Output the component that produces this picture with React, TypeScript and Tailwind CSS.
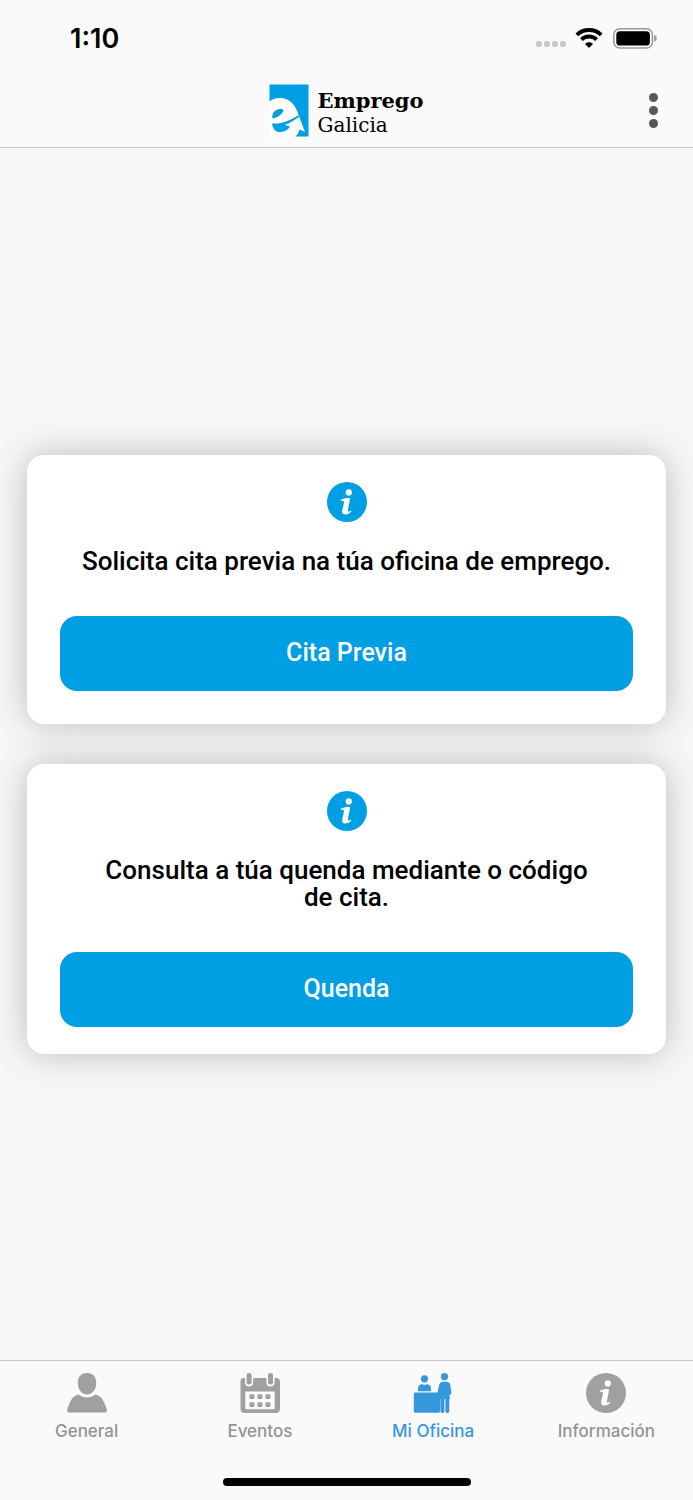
import React from 'react';

type IconProps = {
  className?: string;
};

const InfoIcon = ({ className }: IconProps) => (
  <svg viewBox="0 0 40 40" className={className} aria-hidden="true">
    <circle cx="20" cy="20" r="20" fill="currentColor" />
    <circle cx="21.8" cy="10.4" r="3.1" fill="#fff" />
    <path
      d="M13.800 17.700c2.600-1.300 5.600-2 9.200-1.700-.1 4.100-1.700 8.400-2 12-.1 1.400.4 1.900 1.400 1.500.6-.2 1-.5 1.500-.9l.4 1c-1.700 2-3.900 3-6.200 2.900-2.400-.1-3.200-1.600-2.900-3.800.4-2.900 1.700-6.100 1.700-8.900 0-1.300-1.200-1.300-3-1z"
      fill="#fff"
    />
  </svg>
);

const PersonIcon = ({ className }: IconProps) => (
  <svg viewBox="0 0 40 40" className={className} fill="currentColor" aria-hidden="true">
    <path d="M20 0c6 0 9.200 3.800 9.200 9.800C29.200 16.500 25.500 21.500 20 21.500S10.800 16.500 10.800 9.800C10.800 3.800 14 0 20 0z" />
    <path d="M11.800 21.500C14 23.500 16.800 24.500 20 24.500s6-1 8.200-3c3.300.9 5.500 2 7 4.400 2 3.200 3.700 7 4.600 10.600.5 1.800-.5 3-2.300 3h-35c-1.800 0-2.800-1.200-2.300-3 .9-3.600 2.600-7.400 4.600-10.600 1.500-2.400 3.700-3.500 7-4.400z" />
  </svg>
);

const CalendarIcon = ({ className }: IconProps) => (
  <svg viewBox="0 0 40 40" className={className} fill="currentColor" aria-hidden="true">
    <rect x="6.600" y="0" width="5" height="11.500" rx="2.200" />
    <rect x="28" y="0" width="5" height="11.500" rx="2.200" />
    <path
      fillRule="evenodd"
      d="M3.500 5H5v4.500c0 2.400 1.500 4 4.100 4s4.100-1.600 4.100-4V5h13.200v4.500c0 2.400 1.500 4 4.100 4s4.100-1.600 4.100-4V5h1.900c2 0 3.500 1.500 3.500 3.500V36c0 2.400-1.600 4-4 4H4.500c-2.400 0-4-1.600-4-4V8.500C.5 6.500 1.500 5 3.500 5zM5.300 18.600v16.600c0 .6.400 1 1 1h27.400c.6 0 1-.4 1-1V18.600z"
    />
    <rect x="9.400" y="21.300" width="5" height="4.800" rx=".9" />
    <rect x="17.400" y="21.300" width="5" height="4.800" rx=".9" />
    <rect x="25.400" y="21.300" width="5" height="4.800" rx=".9" />
    <rect x="9.400" y="29.300" width="5" height="4.800" rx=".9" />
    <rect x="17.400" y="29.300" width="5" height="4.800" rx=".9" />
    <rect x="25.400" y="29.300" width="5" height="4.800" rx=".9" />
  </svg>
);

const OfficeIcon = ({ className }: IconProps) => (
  <svg viewBox="0 0 40 40" className={className} fill="currentColor" aria-hidden="true">
    <circle cx="11.500" cy="5.800" r="3.600" />
    <path d="M5 18.300v-2.600c0-3 1.500-4.500 4.300-4.500l2.200.8 2.200-.8c2.800 0 4.300 1.500 4.300 4.500v2.600z" />
    <circle cx="31.500" cy="3.600" r="3.600" />
    <path d="M2.500 19.500h22l1.500-7c.5-2.400 1.700-3.800 4-3.800h3.500c2.200 0 3.500 1.300 3.900 3.500l1 7c.2 1.400-.5 2.300-1.800 2.500v4.300h-9.500V38c0 1.200-.6 1.700-1.700 1.700H2.500C1.400 39.700.8 39.100.8 38V21.200c0-1.100.6-1.700 1.700-1.700z" />
    <path d="M27.400 25h4v13c0 1.200-.7 2-2 2s-2-.8-2-2zM32.400 25h3.900v13c0 1.200-.7 2-2 2s-1.900-.8-1.900-2z" />
  </svg>
);

const WifiIcon = ({ className }: IconProps) => (
  <svg viewBox="0 0 28 20" className={className} fill="none" stroke="currentColor" strokeWidth="3.800" aria-hidden="true">
    <path d="M1.800 6.800C8.500.4 19.500.4 26.200 6.800" />
    <path d="M6.400 11.500c4.200-4 11-4 15.200 0" />
    <path d="M14 20l-4-4c2.200-2.200 5.800-2.200 8 0z" fill="currentColor" stroke="none" />
  </svg>
);

const BatteryIcon = ({ className }: IconProps) => (
  <svg viewBox="0 0 44 21" className={className} aria-hidden="true">
    <rect x=".8" y=".8" width="38.600" height="19.200" rx="6" fill="none" stroke="#999" strokeWidth="1.500" />
    <rect x="3.300" y="3.300" width="33.600" height="14.200" rx="3.600" fill="#000" />
    <path d="M41.200 7c1.600.6 2.500 1.800 2.500 3.400s-.9 2.800-2.500 3.400z" fill="#999" />
  </svg>
);

const Logo = () => (
  <div className="col-start-2 flex items-start">
    <svg viewBox="0 0 40 53" className="h-[53px] w-10" aria-hidden="true">
      <path d="M.5.500h39v52H.5z" fill="#009ee2" />
      <path d="M0 17.500C3.500 15 7 14 11 14c9.500 0 16 7 18.500 17l6.500 17-5.500-2.500c-.8 3-2.300 5.500-4.500 7.500H0z" fill="#fff" />
      <path d="M3.500 34.500C2.500 29 6 25.500 11 25c3.300-.3 4.100 1.200 2.300 3.700-2.200 3-5.600 4.900-9.800 5.800z" fill="#009ee2" />
      <path d="M3 39.500c9.500.8 18-3 26.300-8.300l.7 1.800c-4.500 3.200-9.500 6.300-14.500 7.800l5.500 1.700c-2.500 4-7 6-11.500 5.500C6 47.500 3.800 44 3 39.500z" fill="#009ee2" />
    </svg>
    <div className="ml-2 mt-[5px] font-['DejaVu_Serif',serif] text-black">
      <div className="text-[21px] font-bold leading-6">Emprego</div>
      <div className="text-xl leading-6">Galicia</div>
    </div>
  </div>
);

const StatusBar = () => (
  <div className="flex h-[74px] items-start justify-between pl-[70px] pr-9 pt-[22px]">
    <span className="text-[27px] font-semibold leading-[34px] text-black">1:10</span>
    <div className="flex h-8 items-center">
      <div className="mr-[9px] mt-3 flex gap-[2px]">
        {[0, 1, 2, 3].map((dot) => (
          <span key={dot} className="size-[6px] rounded-[2px] bg-[#c8c8c8]" />
        ))}
      </div>
      <WifiIcon className="mr-[10px] h-5 w-7 text-black" />
      <BatteryIcon className="h-[21px] w-11" />
    </div>
  </div>
);

type InfoCardProps = {
  message: string;
  action: string;
  className: string;
};

const InfoCard = ({ message, action, className }: InfoCardProps) => (
  <section
    className={`flex flex-col items-center rounded-[17px] bg-white px-[33px] pt-[27px] shadow-[0_0_36px_rgba(0,0,0,0.24)] ${className}`}
  >
    <InfoIcon className="size-10 text-[#009ee2]" />
    <p className="mt-[26px] text-center font-['Roboto',sans-serif] text-[26px] font-medium leading-[27px] text-black">
      {message}
    </p>
    <button
      type="button"
      className="mt-[41px] h-[75px] w-full rounded-[17px] bg-[#009ee2] font-['Roboto',sans-serif] text-[25px] font-medium text-white"
    >
      {action}
    </button>
  </section>
);

const tabs = [
  { label: 'General', Icon: PersonIcon },
  { label: 'Eventos', Icon: CalendarIcon },
  { label: 'Mi Oficina', Icon: OfficeIcon, active: true },
  { label: 'Información', Icon: InfoIcon },
];

const TabBar = () => (
  <footer className="border-t border-[#c9c9c9] bg-[#fafafa] pb-[14px]">
    <nav className="grid h-[117px] grid-cols-4 pt-3">
      {tabs.map(({ label, Icon, active }) => (
        <a
          key={label}
          href="#"
          aria-current={active ? 'page' : undefined}
          className={`flex flex-col items-center ${active ? 'text-[#3498db]' : 'text-[#a0a0a0]'}`}
        >
          <Icon className="size-10" />
          <span className={`mt-2 text-[17px] font-medium leading-5 ${active ? '' : 'text-[#939393]'}`}>{label}</span>
        </a>
      ))}
    </nav>
    <div className="mx-auto h-2 w-[248px] rounded-full bg-black" />
  </footer>
);

export default function App() {
  return (
    <div className="flex min-h-screen flex-col bg-[#f7f7f7] font-['Inter',sans-serif]">
      <header className="border-b border-[#c9c9c9] bg-[#fafafa]">
        <StatusBar />
        <div className="grid h-[73px] grid-cols-[1fr_auto_1fr] items-center">
          <Logo />
          <button type="button" aria-label="Menú" className="col-start-3 mr-[35px] flex flex-col gap-1 justify-self-end">
            <span className="size-[9px] rounded-full bg-[#585858]" />
            <span className="size-[9px] rounded-full bg-[#585858]" />
            <span className="size-[9px] rounded-full bg-[#585858]" />
          </button>
        </div>
      </header>
      <main className="flex flex-1 flex-col justify-center gap-10 px-[27px]">
        <InfoCard message="Solicita cita previa na túa oficina de emprego." action="Cita Previa" className="pb-[33px]" />
        <InfoCard message={'Consulta a túa quenda mediante o código de\u00a0cita.'} action="Quenda" className="pb-[27px]" />
      </main>
      <TabBar />
    </div>
  );
}
